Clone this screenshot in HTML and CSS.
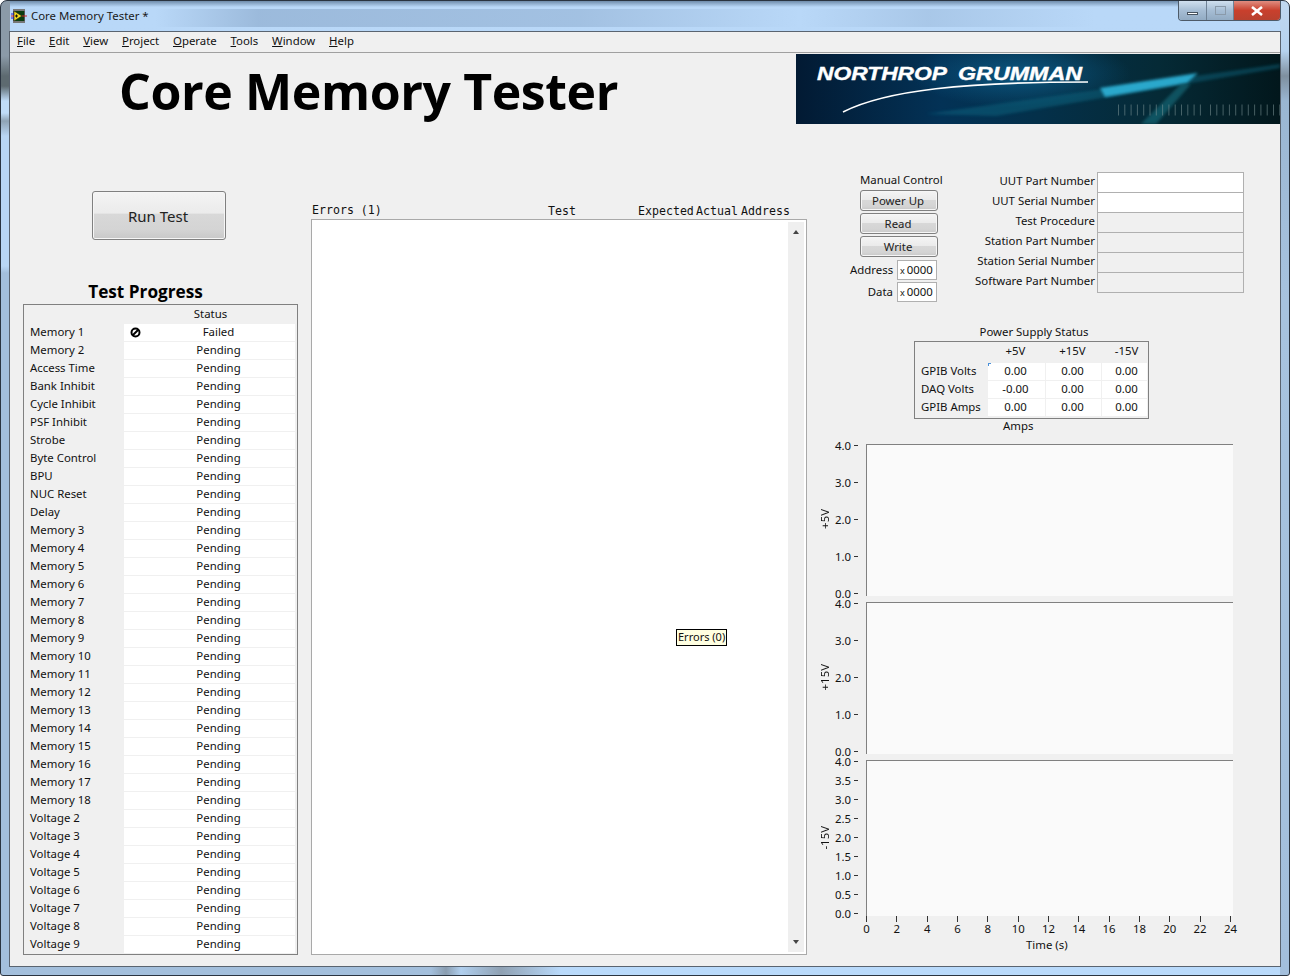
FILE: index.html
```html
<!DOCTYPE html>
<html lang="en">
<head>
    <meta charset="UTF-8">
    <title>Core Memory Tester</title>
    <link rel="stylesheet" href="styles.css">
</head>
<body>

<div class="window">
    <div class="titlebar">
        <svg class="app-icon" width="16" height="16" viewBox="0 0 16 16">
            <rect x="2" y="1" width="12" height="14" fill="#555"/>
            <path d="M2.5 2 H14 M2.5 14 H14" stroke="#ddd" stroke-width="1" stroke-dasharray="1 1"/>
            <rect x="3" y="3" width="10" height="10" fill="#0a3d12"/>
            <path d="M3 3 L11 8 L3 13 Z" fill="#f6dc1e" stroke="#222" stroke-width=".6"/>
            <path d="M4 8 H7 M5.5 6.5 V9.5" stroke="#111" stroke-width="1"/>
            <path d="M0 6 H3 M0 10 H3" stroke="#22c" stroke-width="1"/>
            <path d="M0 8 H3 M11 8 H16" stroke="#c22" stroke-width="1"/>
        </svg>
        <span class="title-text">Core Memory Tester *</span>
        <div class="caption-btns">
            <div class="cap cap-min"><span></span></div>
            <div class="cap cap-max"><span></span></div>
            <div class="cap cap-close">
                <svg width="14" height="10" viewBox="0 0 14 10"><path d="M2 1 L12 9 M12 1 L2 9" stroke="#fff" stroke-width="2.6"/></svg>
            </div>
        </div>
    </div>

    <div class="client">
        <div class="menubar">
            <span><u>F</u>ile</span>
            <span><u>E</u>dit</span>
            <span><u>V</u>iew</span>
            <span><u>P</u>roject</span>
            <span><u>O</u>perate</span>
            <span><u>T</u>ools</span>
            <span><u>W</u>indow</span>
            <span><u>H</u>elp</span>
        </div>

        <div class="panel">
            <div class="header">
                <h1>Core Memory Tester</h1>
                <svg class="logo" width="484" height="70" viewBox="0 0 484 70">
                    <defs>
                        <linearGradient id="bg" x1="0" y1="0" x2="1" y2="0">
                            <stop offset="0" stop-color="#021a33"/>
                            <stop offset=".3" stop-color="#033256"/>
                            <stop offset=".5" stop-color="#04304a"/>
                            <stop offset=".75" stop-color="#052a36"/>
                            <stop offset="1" stop-color="#02171c"/>
                        </linearGradient>
                        <radialGradient id="glow" cx=".5" cy=".5" r=".5">
                            <stop offset="0" stop-color="#0d5f8c" stop-opacity=".8"/>
                            <stop offset="1" stop-color="#0d5f8c" stop-opacity="0"/>
                        </radialGradient>
                        <filter id="soft"><feGaussianBlur stdDeviation="1.5"/></filter>
                    </defs>
                    <rect width="484" height="70" fill="url(#bg)"/>
                    <ellipse cx="225" cy="20" rx="110" ry="34" fill="url(#glow)"/>
                    <path d="M130 60 L484 10 V14 L200 62 Z" fill="#0d6a85" opacity=".45" filter="url(#soft)"/>
                    <path d="M304 34 L402 19 L391 29 L309 43 Z" fill="#29a8cc" filter="url(#soft)"/>
                    <path d="M345 70 L385 30 L395 30 L360 70 Z" fill="#13707f" opacity=".6" filter="url(#soft)"/>
                    <path d="M47 58 C90 36 170 28 292 28" fill="none" stroke="#fff" stroke-width="1.6"/>
                    <text class="logo-text" x="21" y="25.5" textLength="130" lengthAdjust="spacingAndGlyphs">NORTHROP</text>
                    <text class="logo-text" x="162" y="25.5" textLength="124" lengthAdjust="spacingAndGlyphs">GRUMMAN</text>
                    <path d="M322 56 H405 M414 56 H484" stroke="#7d9496" stroke-width="11" stroke-dasharray="1 5.3" opacity=".55"/>
                </svg>
            </div>

            <div class="columns">
                <div class="col-left">
                    <div class="run-wrap"><button class="lv-btn run-btn">Run Test</button></div>
                    <h2>Test Progress</h2>
                    <table class="progress" id="progress">
                        <tr class="progress-head"><th></th><th>Status</th></tr>
                    </table>
                </div>

                <div class="col-mid">
                    <div class="err-head">
                        <span class="err-title">Errors (1)</span>
                        <span class="err-test">Test</span>
                        <span class="err-exp">Expected</span>
                        <span class="err-act">Actual</span>
                        <span class="err-addr">Address</span>
                    </div>
                    <div class="listbox">
                        <div class="scrollbar">
                            <i class="arrow-up"></i>
                            <i class="arrow-down"></i>
                        </div>
                        <div class="tip">Errors (0)</div>
                    </div>
                </div>

                <div class="col-right">
                    <div class="top-row">
                        <div class="manual">
                            <div class="manual-title">Manual Control</div>
                            <button class="lv-btn small-btn">Power Up</button>
                            <button class="lv-btn small-btn">Read</button>
                            <button class="lv-btn small-btn">Write</button>
                            <div class="hex-row"><label>Address</label><div class="hex"><small>x</small>0000</div></div>
                            <div class="hex-row"><label>Data</label><div class="hex"><small>x</small>0000</div></div>
                        </div>
                        <div class="ids">
                            <label>UUT Part Number</label><div class="id-box on"></div>
                            <label>UUT Serial Number</label><div class="id-box on"></div>
                            <label>Test Procedure</label><div class="id-box"></div>
                            <label>Station Part Number</label><div class="id-box"></div>
                            <label>Station Serial Number</label><div class="id-box"></div>
                            <label>Software Part Number</label><div class="id-box"></div>
                        </div>
                    </div>

                    <div class="psu-title">Power Supply Status</div>
                    <table class="psu">
                        <tr class="psu-head"><th></th><th>+5V</th><th>+15V</th><th>-15V</th></tr>
                        <tr><th>GPIB Volts</th><td class="first">0.00</td><td>0.00</td><td>0.00</td></tr>
                        <tr><th>DAQ Volts</th><td>-0.00</td><td>0.00</td><td>0.00</td></tr>
                        <tr><th>GPIB Amps</th><td>0.00</td><td>0.00</td><td>0.00</td></tr>
                    </table>
                    <div class="amps">Amps</div>

                    <div class="charts">
                        <div class="chart">
                            <div class="y-name"><span>+5V</span></div>
                            <div class="y-scale" data-ticks="4.0,3.0,2.0,1.0,0.0"></div>
                            <div class="plot"></div>
                        </div>
                        <div class="chart">
                            <div class="y-name"><span>+15V</span></div>
                            <div class="y-scale" data-ticks="4.0,3.0,2.0,1.0,0.0"></div>
                            <div class="plot"></div>
                        </div>
                        <div class="chart chart-last">
                            <div class="y-name"><span>-15V</span></div>
                            <div class="y-scale" data-ticks="4.0,3.5,3.0,2.5,2.0,1.5,1.0,0.5,0.0"></div>
                            <div class="plot"></div>
                        </div>
                    </div>
                    <div class="x-scale" id="xScale"></div>
                    <div class="x-name">Time (s)</div>
                </div>
            </div>
        </div>
    </div>
</div>

<script src="app.js"></script>
</body>
</html>
```

FILE: styles.css
```css
html, body {
    margin: 0;
    height: 100%;
    overflow: hidden;
}
body {
    font-family: 'Noto Sans', sans-serif;
    font-size: 11.4px;
    color: #111;
}
.window {
    width: 1290px;
    height: 976px;
    box-sizing: border-box;
    border: 1px solid #2a3440;
    border-radius: 7px 7px 3px 3px;
    padding: 0 8px 8px;
    background:
        linear-gradient(90deg, rgba(255,255,255,0) 12%, rgba(120,150,185,.45) 20%, rgba(120,150,185,.35) 45%, rgba(255,255,255,0) 62%, rgba(120,150,185,.25) 72%, rgba(255,255,255,0) 85%) 0 8px / 100% 18px no-repeat,
        linear-gradient(#8b9aa8 0, #8b9aa8 55px, #5d6a70 75px, #5d6a70 85px, #c0dcf8 100px, #c0dcf8 112px, #8fa3b5 120px, #b9d6f4 135px, #b9d6f4 265px, #a3bfdc 272px) 0 0 / 9px 100% no-repeat,
        linear-gradient(#c0d8f0 0, #b6d2ee 50px, #7e8f9f 75px, #9ab6d2 100px, #a7c3df 300px, #a3bfdc 100%) 100% 0 / 9px 100% no-repeat,
        linear-gradient(90deg, #a3bfdc 0, #a3bfdc 430px, #8a9db0 445px, #b0cfee 460px, #8fa1b3 500px, #b9dafb 560px) 0 100% / 100% 9px no-repeat,
        linear-gradient(#6f8cab 0, #b9d8f8 6px, #b7d6f6 100%);
    display: flex;
    flex-direction: column;
}
.titlebar {
    height: 30px;
    display: flex;
    align-items: center;
    flex: none;
    padding-left: 2px;
    box-sizing: border-box;
    padding-bottom: 1px;
}
.app-icon {
    margin-right: 4px;
}
.title-text {
    font-size: 11.4px;
    color: #1a1a1a;
}
.caption-btns {
    margin-left: auto;
    align-self: flex-start;
    display: flex;
    height: 19px;
    border: 1px solid #4d5a68;
    border-top: none;
    border-radius: 0 0 4px 4px;
    overflow: hidden;
}
.cap {
    display: flex;
    align-items: center;
    justify-content: center;
    height: 100%;
}
.cap-min {
    width: 27px;
}
.cap-max {
    width: 26px;
}
.cap-min, .cap-max {
    background: linear-gradient(#cfdfee, #a6bdd4 50%, #92abc3);
    border-right: 1px solid #6f8296;
}
.cap-min span {
    width: 11px;
    height: 3px;
    background: #fff;
    border: 1px solid #46525e;
    box-sizing: border-box;
    margin-top: 5px;
}
.cap-max span {
    width: 11px;
    height: 9px;
    border: 1px solid #8a9aaa;
    box-sizing: border-box;
}
.cap-close {
    width: 46px;
    background: linear-gradient(#e08d80, #c9402d 50%, #b8412f);
}
.client {
    flex: 1;
    border: 1px solid #5a6470;
    background: #f0f0f0;
    display: flex;
    flex-direction: column;
    min-height: 0;
}
.menubar {
    height: 20px;
    box-sizing: content-box;
    flex: none;
    display: flex;
    gap: 13.8px;
    align-items: flex-start;
    padding-left: 7px;
    border-bottom: 1px solid #a0a0a0;
    line-height: 17px;
}
.panel {
    flex: 1;
    min-height: 0;
}
.header {
    height: 71px;
    display: flex;
    justify-content: space-between;
    align-items: flex-end;
}
.header h1 {
    margin: 3px 0 0 109px;
    align-self: flex-start;
    font-family: 'Open Sans', sans-serif;
    font-size: 50px;
    font-weight: 700;
    color: #000;
    line-height: 71px;
    letter-spacing: -.4px;
}
.logo {
    display: block;
}
.logo-text {
    font-family: 'Liberation Sans', sans-serif;
    font-size: 19px;
    font-weight: 700;
    font-style: italic;
    fill: #fff;
    stroke: #fff;
    stroke-width: .4px;
}
.columns {
    display: flex;
    align-items: flex-start;
}
.col-left {
    width: 275px;
    margin-left: 13px;
}
.run-wrap {
    padding: 67px 0 0 69px;
}
.lv-btn {
    display: block;
    font-family: 'Noto Sans', sans-serif;
    color: #222;
    border: 1px solid #808080;
    border-radius: 3px;
    padding: 0;
    background: linear-gradient(#f4f4f4 0, #ebebeb 45%, #d8d8d8 47%, #d4d4d4 80%, #c8c8c8 100%);
    box-shadow: inset 0 0 0 1px #f6f6f6;
}
.run-btn {
    width: 134px;
    height: 49px;
    font-size: 15px;
    padding-right: 2px;
}
.col-left h2 {
    margin: 42px 0 2px;
    padding-right: 30px;
    font-family: 'Open Sans', sans-serif;
    font-size: 17.2px;
    font-weight: 700;
    color: #000;
    text-align: center;
    line-height: 20px;
}
.progress {
    width: 275px;
    border: 1px solid #808080;
    border-collapse: separate;
    border-spacing: 0;
    padding: 1px 2px 1px;
    table-layout: fixed;
    box-sizing: border-box;
    background: #f0f0f0;
}
.progress td, .progress th {
    height: 17px;
    line-height: 15px;
    padding: 0;
    vertical-align: top;
    font-weight: 400;
    border-bottom: 1px solid #f0f0f0;
}
.progress th:first-child, .progress td:first-child {
    width: 94px;
    padding-left: 4px;
    box-sizing: content-box;
}
.progress td:last-child {
    background: #fff;
    text-align: center;
    position: relative;
    padding-left: 18px;
}
.progress-head th:last-child {
    text-align: center;
    background: #f0f0f0;
    padding-left: 2px;
}
.progress-head th {
    border-bottom: none;
    height: 18px;
}
.progress tr:last-child td {
    border-bottom: none;
}
.fail-icon {
    position: absolute;
    left: 6px;
    top: 3px;
}
.col-mid {
    width: 496px;
    margin-left: 13px;
    padding-top: 80px;
}
.err-head {
    display: flex;
    height: 15px;
    font-family: 'DejaVu Sans Mono', monospace;
    font-size: 11.6px;
    line-height: 15px;
    color: #111;
}
.err-title {
    width: 236px;
    padding-left: 1px;
    margin-top: -1px;
}
.err-test {
    width: 90px;
}
.err-exp {
    width: 58px;
}
.err-act {
    width: 45px;
}
.listbox {
    height: 734px;
    border: 1px solid #a9a9a9;
    background: #fff;
    display: flex;
    justify-content: flex-end;
    position: relative;
}
.scrollbar {
    width: 16px;
    margin: 2px 2px 2px;
    background: #efefef;
    display: flex;
    flex-direction: column;
    justify-content: space-between;
    align-items: center;
    padding: 8px 0;
    box-sizing: border-box;
}
.arrow-up {
    width: 0;
    height: 0;
    border: 3.5px solid transparent;
    border-top: none;
    border-bottom: 4px solid #444;
}
.arrow-down {
    width: 0;
    height: 0;
    border: 3.5px solid transparent;
    border-bottom: none;
    border-top: 4px solid #444;
}
.tip {
    position: absolute;
    left: 364px;
    top: 409px;
    height: 15px;
    line-height: 13px;
    font-size: 11px;
    padding: 0 1px;
    border: 1px solid #000;
    background: #ffffe1;
    white-space: nowrap;
}
.col-right {
    width: 430px;
    margin-left: 8px;
}
.top-row {
    display: flex;
    padding-top: 47px;
    height: 200px;
    box-sizing: border-box;
}
.manual {
    width: 120px;
    flex: none;
    display: flex;
    flex-direction: column;
    align-items: flex-start;
    padding-left: 45px;
}
.manual-title {
    height: 19px;
    line-height: 17px;
    white-space: nowrap;
}
.small-btn {
    width: 78px;
    height: 21px;
    flex: none;
    margin-bottom: 2px;
    font-size: 11.4px;
    padding-right: 2px;
}
.hex-row {
    display: flex;
    align-items: center;
    margin-left: -10px;
    height: 22px;
    flex: none;
}
.hex-row label {
    width: 43px;
    text-align: right;
    margin-right: 4px;
    margin-top: -2px;
    white-space: nowrap;
}
.hex {
    width: 40px;
    height: 20px;
    box-sizing: border-box;
    border: 1px solid #b0b0b0;
    background: #fff;
    line-height: 18px;
    padding-left: 2px;
    white-space: nowrap;
}
.hex small {
    font-size: 9px;
    margin-right: 2px;
}
.ids {
    margin-left: -11px;
    display: grid;
    grid-template-columns: 126px 147px;
    grid-auto-rows: 20px;
    column-gap: 2px;
    margin-top: 1px;
    height: 121px;
}
.ids label {
    text-align: right;
    line-height: 18px;
    white-space: nowrap;
}
.id-box {
    border: 1px solid #b0b0b0;
    margin-bottom: -1px;
}
.id-box.on {
    background: #fff;
}
.psu-title {
    padding-left: 99px;
    width: 240px;
    height: 17px;
    text-align: center;
    line-height: 15px;
}
.psu {
    margin-left: 99px;
    width: 235px;
    height: 78px;
    box-sizing: border-box;
    border: 1px solid #808080;
    border-collapse: separate;
    border-spacing: 0;
    table-layout: fixed;
    padding: 1px;
}
.psu th, .psu td {
    padding: 0;
    font-weight: 400;
    text-align: center;
    height: 17px;
    line-height: 15px;
    vertical-align: top;
}
.psu-head th {
    height: 20px;
}
.psu th:first-child {
    width: 72px;
    text-align: left;
    padding-left: 5px;
    box-sizing: border-box;
}
.psu-head th:nth-child(2) {
    width: 58px;
    padding-right: 3px;
    box-sizing: border-box;
}
.psu-head th:nth-child(3) {
    width: 56px;
    padding-right: 3px;
    box-sizing: border-box;
}
.psu-head th:last-child {
    padding-left: 4px;
}
.psu td {
    background: #fff;
    border-bottom: 1px solid #f0f0f0;
    border-right: 1px solid #f0f0f0;
    padding-right: 2px;
}
.psu td:last-child {
    border-right: none;
    padding-right: 0;
    padding-left: 4px;
}
.psu td.first {
    background: linear-gradient(#4a90d9, #4a90d9) 0 0 / 3px 1px no-repeat, linear-gradient(#4a90d9, #4a90d9) 0 0 / 1px 3px no-repeat, #fff;
}
.amps {
    padding-left: 188px;
    line-height: 13px;
    height: 17px;
    margin-bottom: 8px;
}
.chart {
    display: flex;
    height: 152px;
    margin-bottom: 6px;
}
.chart-last {
    height: 156px;
    margin-bottom: 0;
}
.y-name {
    width: 20px;
    display: flex;
    align-items: center;
    justify-content: center;
    padding-bottom: 2px;
    box-sizing: border-box;
}
.chart-last .y-name {
    padding-bottom: 0;
}
.y-name span {
    writing-mode: vertical-rl;
    transform: rotate(180deg);
    line-height: 12px;
    white-space: nowrap;
}
.y-scale {
    width: 31px;
    display: flex;
    flex-direction: column;
    justify-content: space-between;
    padding: 1px 0 3px;
    box-sizing: border-box;
}
.tick {
    height: 0;
    display: flex;
    align-items: center;
    justify-content: flex-end;
    gap: 3px;
}
.tick span {
    line-height: 9px;
}
.tick::after {
    content: "";
    width: 5px;
    height: 1px;
    background: #333;
    margin-right: 8px;
}
.plot {
    width: 367px;
    background: #fafafa;
    border-top: 1px solid #808080;
    border-left: 1px solid #808080;
    box-sizing: border-box;
}
.x-scale {
    display: flex;
    justify-content: space-between;
    margin-left: 51px;
    width: 365px;
    height: 20px;
}
.x-tick {
    width: 1px;
    height: 6px;
    background: #333;
    display: flex;
    justify-content: center;
    white-space: nowrap;
}
.x-tick span {
    margin-top: 5px;
    line-height: 16px;
}
.x-name {
    padding-left: 211px;
    line-height: 16px;
    margin-top: 1px;
}
```

FILE: app.js
```js
const rows = [
    'Memory 1', 'Memory 2', 'Access Time', 'Bank Inhibit', 'Cycle Inhibit', 'PSF Inhibit', 'Strobe',
    'Byte Control', 'BPU', 'NUC Reset', 'Delay', 'Memory 3', 'Memory 4', 'Memory 5', 'Memory 6',
    'Memory 7', 'Memory 8', 'Memory 9', 'Memory 10', 'Memory 11', 'Memory 12', 'Memory 13',
    'Memory 14', 'Memory 15', 'Memory 16', 'Memory 17', 'Memory 18', 'Voltage 2', 'Voltage 3',
    'Voltage 4', 'Voltage 5', 'Voltage 6', 'Voltage 7', 'Voltage 8', 'Voltage 9'
];

const failIcon = '<svg class="fail-icon" width="11" height="11" viewBox="0 0 11 11">' +
    '<circle cx="5.5" cy="5.5" r="4" fill="none" stroke="#000" stroke-width="2"/>' +
    '<path d="M2.5 8.5 L8.5 2.5" stroke="#000" stroke-width="2"/></svg>';

const table = document.getElementById('progress');
rows.forEach((name, i) => {
    const tr = document.createElement('tr');
    const status = i === 0 ? failIcon + 'Failed' : 'Pending';
    tr.innerHTML = `<td>${name}</td><td>${status}</td>`;
    table.appendChild(tr);
});

document.querySelectorAll('.y-scale').forEach(scale => {
    scale.dataset.ticks.split(',').forEach(label => {
        const tick = document.createElement('div');
        tick.className = 'tick';
        tick.innerHTML = `<span>${label}</span>`;
        scale.appendChild(tick);
    });
});

const xScale = document.getElementById('xScale');
for (let t = 0; t <= 24; t += 2) {
    const tick = document.createElement('div');
    tick.className = 'x-tick';
    tick.innerHTML = `<span>${t}</span>`;
    xScale.appendChild(tick);
}
```
